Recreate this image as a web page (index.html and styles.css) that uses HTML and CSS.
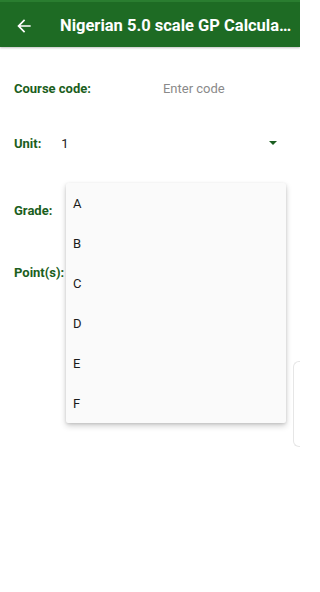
FILE: index.html
```html
<!DOCTYPE html>
<html>
<head>
<meta charset="utf-8">
<link rel="stylesheet" href="styles.css">
</head>
<body>
<div class="app">
  <header class="bar">
    <svg class="back" viewBox="0 0 24 24" width="20" height="20"><path d="M20 11H7.83l5.59-5.59L12 4l-8 8 8 8 1.41-1.41L7.83 13H20v-2z" fill="#fff"/></svg>
    <div class="title">Nigerian 5.0 scale GP Calcula…</div>
  </header>
  <main class="form">
    <div class="row r1">
      <span class="label">Course code:</span>
      <span class="hint">Enter code</span>
    </div>
    <div class="row r2">
      <span class="label">Unit:</span>
      <span class="value">1</span>
      <span class="caret"></span>
    </div>
    <div class="row r3">
      <span class="label">Grade:</span>
    </div>
    <div class="row r4">
      <span class="label">Point(s):</span>
    </div>
  </main>
  <ul class="menu">
    <li>A</li>
    <li>B</li>
    <li>C</li>
    <li>D</li>
    <li>E</li>
    <li>F</li>
  </ul>
  <div class="edge-card"></div>
</div>
</body>
</html>
```
FILE: styles.css
```css
* { box-sizing: border-box; }
html, body { margin: 0; padding: 0; overflow: hidden; }
body {
  width: 300px;
  height: 592px;
  background: #fff;
  font-family: Roboto, "Noto Sans", sans-serif;
}
.app { position: relative; width: 300px; height: 592px; overflow: hidden; }
.bar {
  height: 47px;
  background: #1e6b24;
  border-top: 2px solid #2a7d30;
  display: flex;
  align-items: center;
  padding: 2px 0 0 14px;
  box-shadow: 0 1px 2px rgba(0,0,0,0.25);
}
.back { flex: none; display: block; }
.title {
  margin-left: 26px;
  color: #fff;
  font-weight: 700;
  font-size: 16.5px;
  white-space: nowrap;
}
.form { padding: 0 14px; }
.row {
  height: 40px;
  display: flex;
  align-items: center;
}
.r1 { margin-top: 21px; }
.r2 { margin-top: 15px; }
.r3 { margin-top: 27px; }
.r4 { margin-top: 22px; }
.label {
  color: #1b5e20;
  font-weight: 700;
  font-size: 13px;
}
.hint {
  margin-left: 72px;
  color: #8a8a8a;
  font-size: 13px;
}
.value {
  margin-left: 20px;
  color: #222;
  font-size: 13px;
  flex: 1;
}
.caret {
  width: 0; height: 0;
  border-left: 4px solid transparent;
  border-right: 4px solid transparent;
  border-top: 4px solid #1b5e20;
  margin-right: 9px;
}
.menu {
  position: absolute;
  left: 66px;
  top: 183px;
  width: 220px;
  margin: 0;
  padding: 0;
  list-style: none;
  background: #fafafa;
  border-radius: 2px;
  box-shadow: 0 3px 6px rgba(0,0,0,0.18), 0 1px 3px rgba(0,0,0,0.12);
}
.menu li {
  height: 40px;
  display: flex;
  align-items: center;
  padding-left: 7px;
  font-size: 13px;
  color: #1a1a1a;
}
.edge-card {
  position: absolute;
  left: 293px;
  top: 361px;
  width: 7px;
  height: 86px;
  border: 1px solid #e6e6e6;
  border-right: none;
  border-radius: 6px 0 0 6px;
  background: #fff;
}
```
